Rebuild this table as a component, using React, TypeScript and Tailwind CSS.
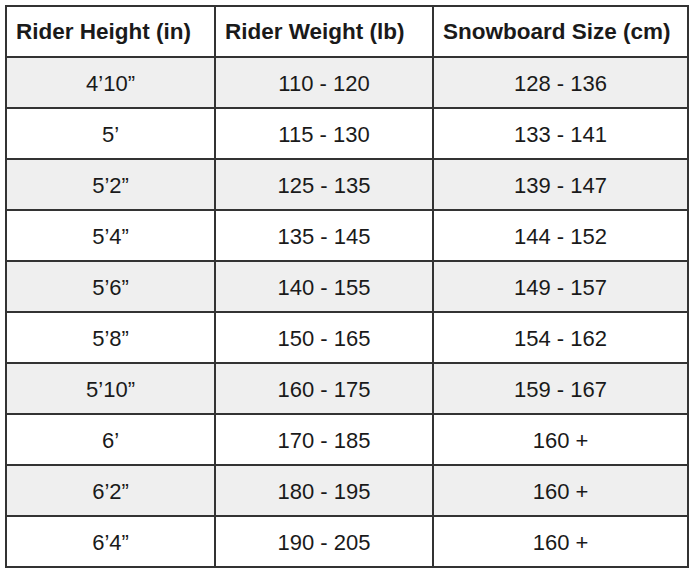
import React from "react";

const rows: [string, string, string][] = [
  ["4\u201910\u201d", "110 - 120", "128 - 136"],
  ["5\u2019", "115 - 130", "133 - 141"],
  ["5\u20192\u201d", "125 - 135", "139 - 147"],
  ["5\u20194\u201d", "135 - 145", "144 - 152"],
  ["5\u20196\u201d", "140 - 155", "149 - 157"],
  ["5\u20198\u201d", "150 - 165", "154 - 162"],
  ["5\u201910\u201d", "160 - 175", "159 - 167"],
  ["6\u2019", "170 - 185", "160 +"],
  ["6\u20192\u201d", "180 - 195", "160 +"],
  ["6\u20194\u201d", "190 - 205", "160 +"],
];

export default function App() {
  return (
    <div className="w-[692px] h-[575px] bg-white pt-[5px] pl-[5px]" style={{ fontFamily: '"Liberation Sans", Arial, sans-serif' }}>
      <table className="border-collapse border-2 border-[#333333] text-[#1a1a1a] w-[682px] table-fixed">
        <colgroup>
          <col className="w-[209px]" />
          <col className="w-[218px]" />
          <col className="w-[255px]" />
        </colgroup>
        <thead>
          <tr className="h-[51px]">
            <th className="border-2 border-[#333333] text-left pl-[9px] text-[22.5px] font-bold p-0">Rider Height (in)</th>
            <th className="border-2 border-[#333333] text-left pl-[9px] text-[22.5px] font-bold p-0">Rider Weight (lb)</th>
            <th className="border-2 border-[#333333] text-left pl-[9px] text-[22.5px] font-bold p-0">Snowboard Size (cm)</th>
          </tr>
        </thead>
        <tbody>
          {rows.map((r, i) => (
            <tr key={i} className={`h-[51px] ${i % 2 === 0 ? "bg-[#efefef]" : "bg-white"}`}>
              {r.map((c, j) => (
                <td key={j} className="border-2 border-[#333333] text-center text-[22px] p-0 pt-[1px]">{c}</td>
              ))}
            </tr>
          ))}
        </tbody>
      </table>
    </div>
  );
}
